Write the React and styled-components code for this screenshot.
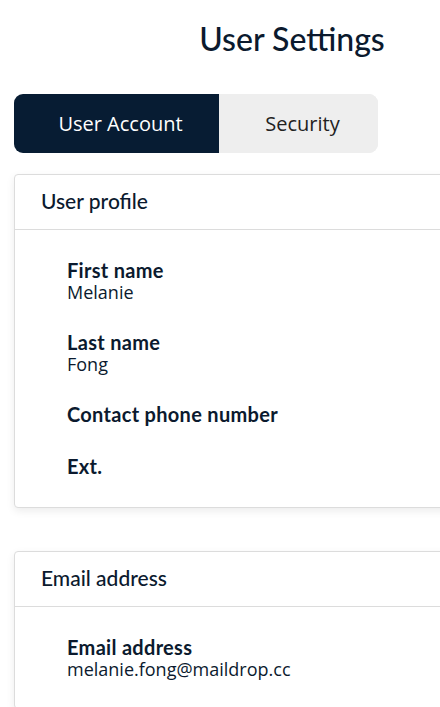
import styled, { createGlobalStyle } from "styled-components";

const GlobalStyle = createGlobalStyle`
  html, body {
    margin: 0;
    padding: 0;
    background: #ffffff;
    overflow: hidden;
  }
  * {
    box-sizing: border-box;
  }
`;

const Page = styled.div`
  width: 584px;
  padding: 0 14px 40px;
  color: #0b1a2e;
`;

const Title = styled.h1`
  margin: 0;
  padding-top: 20px;
  text-align: center;
  font-family: "Lato", sans-serif;
  font-weight: 500;
  font-size: 32px;
  line-height: 38px;
  color: #0b1a2e;
`;

const Tabs = styled.div`
  display: flex;
  margin-top: 36px;
  width: 364px;
  height: 59px;
  border-radius: 9px;
  overflow: hidden;
  background: #eeeeee;
`;

const Tab = styled.button`
  border: 0;
  margin: 0;
  width: ${(p) => p.$width}px;
  padding: 0 0 0 8px;
  font-family: "Open Sans", sans-serif;
  font-size: 20px;
  cursor: pointer;
  background: ${(p) => (p.$active ? "#071c33" : "#eeeeee")};
  color: ${(p) => (p.$active ? "#ffffff" : "#222222")};
`;

const Card = styled.section`
  margin-top: ${(p) => p.$top}px;
  border: 1px solid #dcdcdc;
  border-radius: 4px;
  background: #fff;
  box-shadow: 0 3px 8px rgba(0, 0, 0, 0.08);
`;

const CardHeader = styled.div`
  height: 55px;
  display: flex;
  align-items: center;
  padding: 0 0 4px 26px;
  border-bottom: 1px solid #dcdcdc;
  font-family: "Lato", sans-serif;
  font-weight: 500;
  font-size: 21px;
  color: #0b1a2e;
`;

const CardBody = styled.div`
  padding: 29px 52px 29px;
  display: flex;
  flex-direction: column;
  gap: 29px;
`;

const Field = styled.div`
  display: flex;
  flex-direction: column;
`;

const Label = styled.div`
  font-family: "Lato", sans-serif;
  font-weight: 700;
  font-size: 20px;
  line-height: 23px;
  letter-spacing: 0.3px;
  color: #0b1a2e;
`;

const Value = styled.div`
  font-family: "Open Sans", sans-serif;
  font-size: 18px;
  line-height: 20px;
  color: #0b1a2e;
`;

function InfoField({ label, value }) {
  return (
    <Field>
      <Label>{label}</Label>
      {value && <Value>{value}</Value>}
    </Field>
  );
}

export default function App() {
  return (
    <>
      <GlobalStyle />
      <Page>
        <Title>User Settings</Title>
        <Tabs>
          <Tab $active $width={205}>User Account</Tab>
          <Tab $width={159}>Security</Tab>
        </Tabs>

        <Card $top={21}>
          <CardHeader>User profile</CardHeader>
          <CardBody>
            <InfoField label="First name" value="Melanie" />
            <InfoField label="Last name" value="Fong" />
            <InfoField label="Contact phone number" />
            <InfoField label="Ext." />
          </CardBody>
        </Card>

        <Card $top={43}>
          <CardHeader>Email address</CardHeader>
          <CardBody>
            <InfoField label="Email address" value="melanie.fong@maildrop.cc" />
          </CardBody>
        </Card>
      </Page>
    </>
  );
}
